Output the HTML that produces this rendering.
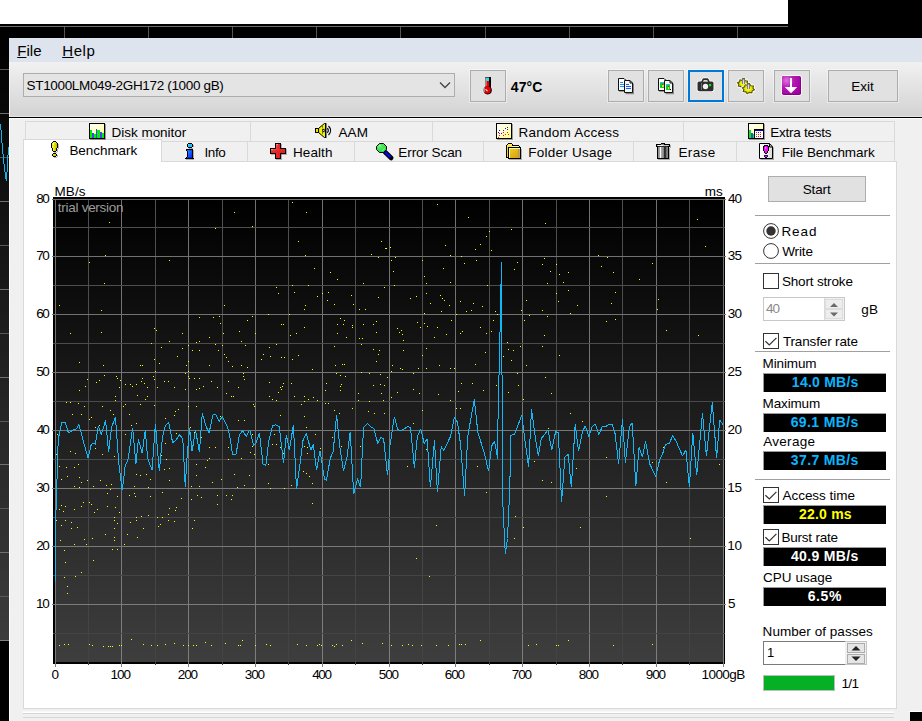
<!DOCTYPE html>
<html><head><meta charset="utf-8"><title>HD Tune Pro</title>
<style>
html,body{margin:0;padding:0;}
body{width:922px;height:721px;background:#000;overflow:hidden;position:relative;font-family:"Liberation Sans",sans-serif;}
.r{position:absolute;box-sizing:border-box;}
.t{position:absolute;white-space:pre;line-height:1;font-family:"Liberation Sans",sans-serif;}
svg{position:absolute;overflow:visible;}
.btn{position:absolute;box-sizing:border-box;border:1px solid #adadad;background:#e1e1e1;box-shadow:0 0 0 1px rgba(255,255,255,0.4);}
.blk{position:absolute;box-sizing:border-box;background:#000;left:763px;width:123px;height:19px;border-top:1px solid #9a9a9a;border-left:1px solid #9a9a9a;margin-top:-1px;}
.cb{position:absolute;box-sizing:border-box;width:16px;height:16px;border:1px solid #333;background:#fff;left:763px;}
.sep{position:absolute;left:755px;width:135px;height:1px;background:#a0a0a0;}
</style></head><body>

<div class="r" style="left:0px;top:0px;width:788px;height:24px;background:#fff;"></div>
<div class="r" style="left:0px;top:27px;width:9px;height:613px;background:linear-gradient(#000,#3c3c3c);"></div>
<svg width="922" height="721" style="left:0;top:0" shape-rendering="crispEdges">
<rect x="0" y="26" width="788" height="1" fill="#6c6c6c"/>
<rect x="64" y="27" width="1" height="11" fill="#555"/>
<rect x="148" y="27" width="1" height="11" fill="#555"/>
<rect x="232" y="27" width="1" height="11" fill="#555"/>
<rect x="316" y="27" width="1" height="11" fill="#555"/>
<rect x="400" y="27" width="1" height="11" fill="#555"/>
<rect x="485" y="27" width="1" height="11" fill="#555"/>
<rect x="569" y="27" width="1" height="11" fill="#555"/>
<rect x="653" y="27" width="1" height="11" fill="#555"/>
<rect x="737" y="27" width="1" height="11" fill="#555"/>
<rect x="0" y="69" width="9" height="1" fill="#585858"/>
<rect x="0" y="113" width="9" height="1" fill="#707070"/>
<rect x="0" y="157" width="9" height="1" fill="#585858"/>
<rect x="0" y="201" width="9" height="1" fill="#707070"/>
<rect x="0" y="245" width="9" height="1" fill="#585858"/>
<rect x="0" y="289" width="9" height="1" fill="#707070"/>
<rect x="0" y="333" width="9" height="1" fill="#585858"/>
<rect x="0" y="377" width="9" height="1" fill="#707070"/>
<rect x="0" y="421" width="9" height="1" fill="#585858"/>
<rect x="0" y="464" width="9" height="1" fill="#707070"/>
<rect x="0" y="508" width="9" height="1" fill="#585858"/>
<rect x="0" y="552" width="9" height="1" fill="#707070"/>
<rect x="0" y="596" width="9" height="1" fill="#585858"/>
<rect x="0" y="640" width="9" height="1" fill="#808080"/>
<polyline points="0.5,124 1.5,136 2.5,149 3.5,159 4.5,168 5.5,176 6.5,181 7.5,164 8.5,147" fill="none" stroke="#12b4ee" stroke-width="1"/>
</svg>
<div class="r" style="left:9px;top:38px;width:913px;height:683px;background:#f0f0f0;"></div>
<div class="r" style="left:9px;top:38px;width:913px;height:24px;background:#dde4ee;"></div>
<div class="r" style="left:9px;top:62px;width:913px;height:54px;background:linear-gradient(#f1f1f1,#d3d3d3);"></div>
<div class="r" style="left:9px;top:116px;width:913px;height:1px;background:#e6e6e6;"></div>
<div class="r" style="left:9px;top:117px;width:913px;height:1px;background:#000;"></div>
<div class="r" style="left:9px;top:118px;width:913px;height:1px;background:#fff;"></div>
<div class="r" style="left:9px;top:118px;width:1px;height:603px;background:#fff;"></div>
<div class="r" style="left:9px;top:62px;width:1px;height:55px;background:#f4f4f4;"></div>
<div class="t" style="left:17.20px;top:43.00px;font-size:15px;color:#000;letter-spacing:0.042px;"><u>F</u>ile</div>
<div class="t" style="left:62.20px;top:43.00px;font-size:15px;color:#000;letter-spacing:0.625px;"><u>H</u>elp</div>
<div class="r" style="left:23px;top:73px;width:432px;height:24px;background:#e4e4e4;border:1px solid #adadad;"></div>
<div class="t" style="left:26.59px;top:79.00px;font-size:13.5px;color:#000;letter-spacing:-0.338px;">ST1000LM049-2GH172 (1000 gB)</div>
<svg width="12" height="8" style="left:439px;top:81px"><polyline points="1,1.5 6,6.5 11,1.5" fill="none" stroke="#444" stroke-width="1.3"/></svg>
<div class="btn" style="left:470px;top:70px;width:36px;height:32px;"></div>
<div class="btn" style="left:608px;top:70px;width:36px;height:32px;"></div>
<div class="btn" style="left:648px;top:70px;width:36px;height:32px;"></div>
<div class="btn" style="left:728px;top:70px;width:36px;height:32px;"></div>
<div class="btn" style="left:774px;top:70px;width:36px;height:32px;"></div>
<div class="btn" style="left:688px;top:70px;width:36px;height:32px;border:2px solid #0078d7;"></div>
<div class="btn" style="left:828px;top:70px;width:70px;height:32px;"></div>
<div class="t" style="left:851.32px;top:80.00px;font-size:13.5px;color:#000;letter-spacing:-0.043px;">Exit</div>
<div class="t" style="left:510.79px;top:80.00px;font-size:14px;color:#000;letter-spacing:0.113px;font-weight:bold;">47&deg;C</div>
<div class="r" style="left:25px;top:121px;width:870px;height:21px;background:#f0f0f0;border:1px solid #d9d9d9;border-bottom:none;"></div>
<div class="r" style="left:250px;top:122px;width:1px;height:19px;background:#d9d9d9;"></div>
<div class="r" style="left:432px;top:122px;width:1px;height:19px;background:#d9d9d9;"></div>
<div class="r" style="left:683px;top:122px;width:1px;height:19px;background:#d9d9d9;"></div>
<div class="r" style="left:23px;top:141px;width:872px;height:21px;background:#f0f0f0;border:1px solid #d9d9d9;"></div>
<div class="r" style="left:247px;top:142px;width:1px;height:19px;background:#d9d9d9;"></div>
<div class="r" style="left:354px;top:142px;width:1px;height:19px;background:#d9d9d9;"></div>
<div class="r" style="left:483px;top:142px;width:1px;height:19px;background:#d9d9d9;"></div>
<div class="r" style="left:633px;top:142px;width:1px;height:19px;background:#d9d9d9;"></div>
<div class="r" style="left:736px;top:142px;width:1px;height:19px;background:#d9d9d9;"></div>
<div class="r" style="left:23px;top:161px;width:874px;height:548px;background:#fff;border:1px solid #d9d9d9;"></div>
<div class="r" style="left:23px;top:139px;width:139px;height:23px;background:#fff;border:1px solid #d9d9d9;border-bottom:none;"></div>
<div class="t" style="left:111.62px;top:126.00px;font-size:13.5px;color:#000;letter-spacing:-0.037px;">Disk monitor</div>
<div class="t" style="left:338.40px;top:126.00px;font-size:13.5px;color:#000;letter-spacing:0.126px;">AAM</div>
<div class="t" style="left:518.52px;top:126.00px;font-size:13.5px;color:#000;letter-spacing:0.235px;">Random Access</div>
<div class="t" style="left:770.32px;top:126.00px;font-size:13.5px;color:#000;letter-spacing:-0.253px;">Extra tests</div>
<div class="t" style="left:69.42px;top:144.00px;font-size:13.5px;color:#000;letter-spacing:-0.054px;">Benchmark</div>
<div class="t" style="left:204.48px;top:146.00px;font-size:13.5px;color:#000;letter-spacing:-0.408px;">Info</div>
<div class="t" style="left:292.92px;top:146.00px;font-size:13.5px;color:#000;letter-spacing:0.109px;">Health</div>
<div class="t" style="left:398.32px;top:146.00px;font-size:13.5px;color:#000;letter-spacing:-0.086px;">Error Scan</div>
<div class="t" style="left:528.32px;top:146.00px;font-size:13.5px;color:#000;letter-spacing:0.235px;">Folder Usage</div>
<div class="t" style="left:678.52px;top:146.00px;font-size:13.5px;color:#000;letter-spacing:0.338px;">Erase</div>
<div class="t" style="left:781.72px;top:146.00px;font-size:13.5px;color:#000;letter-spacing:-0.067px;">File Benchmark</div>
<svg width="922" height="721" style="left:0;top:0">
<defs>
<linearGradient id="yl" x1="0" y1="0" x2="1" y2="1"><stop offset="0" stop-color="#fff"/><stop offset="1" stop-color="#ffff8c"/></linearGradient>
<linearGradient id="gold" x1="0" y1="0" x2="1" y2="1"><stop offset="0" stop-color="#ecd22a"/><stop offset="1" stop-color="#d89a08"/></linearGradient>
<linearGradient id="red" x1="0" y1="0" x2="1" y2="1"><stop offset="0" stop-color="#ff5a5a"/><stop offset="0.4" stop-color="#e42a2a"/><stop offset="1" stop-color="#f01818"/></linearGradient>
<linearGradient id="blu" x1="0" y1="0" x2="1" y2="1"><stop offset="0" stop-color="#1a8aff"/><stop offset="1" stop-color="#0a22f0"/></linearGradient>
<linearGradient id="yel" x1="0" y1="0" x2="1" y2="0"><stop offset="0" stop-color="#f6f640"/><stop offset="0.5" stop-color="#e2e200"/><stop offset="1" stop-color="#b8b800"/></linearGradient>
<radialGradient id="pur" cx="0.25" cy="0.25" r="0.9"><stop offset="0" stop-color="#e070e0"/><stop offset="0.45" stop-color="#b418b4"/><stop offset="1" stop-color="#a000a0"/></radialGradient>
<linearGradient id="can" x1="0" y1="0" x2="1" y2="0"><stop offset="0" stop-color="#8c8c8c"/><stop offset="0.2" stop-color="#a8a8a8"/><stop offset="0.2" stop-color="#fdfdfd"/><stop offset="0.3" stop-color="#fdfdfd"/><stop offset="0.3" stop-color="#b4b4b4"/><stop offset="0.6" stop-color="#7c7c7c"/><stop offset="0.6" stop-color="#262626"/><stop offset="0.8" stop-color="#3a3a3a"/><stop offset="0.8" stop-color="#6c6c6c"/><stop offset="1" stop-color="#8a8a8a"/></linearGradient>
<linearGradient id="pg" x1="0" y1="0" x2="1" y2="0"><stop offset="0" stop-color="#fff"/><stop offset="0.5" stop-color="#f4f4f4"/><stop offset="1" stop-color="#d8d8d8"/></linearGradient>
<radialGradient id="grn" cx="0.35" cy="0.3" r="0.8"><stop offset="0" stop-color="#60f070"/><stop offset="1" stop-color="#20d838"/></radialGradient>
</defs>
<g shape-rendering="crispEdges">
<rect x="90" y="124" width="16" height="16" fill="rgba(0,0,0,0.35)"/>
<rect x="89" y="123" width="16" height="16" fill="#000"/>
<rect x="90" y="124" width="14" height="14" fill="url(#yl)"/>
<rect x="90" y="130" width="2" height="8" fill="#00f000"/>
<rect x="92" y="133" width="2" height="5" fill="#4a3cff"/>
<rect x="94" y="134" width="2" height="4" fill="#00f000"/>
<rect x="96" y="129" width="1" height="9" fill="#4a3cff"/>
<rect x="97" y="130" width="3" height="8" fill="#00f000"/>
<rect x="100" y="132" width="2" height="6" fill="#4a3cff"/>
<rect x="102" y="133" width="2" height="5" fill="#00f000"/>
<rect x="497" y="124" width="16" height="16" fill="rgba(0,0,0,0.35)"/>
<rect x="496" y="123" width="16" height="16" fill="#000"/>
<rect x="497" y="124" width="14" height="14" fill="url(#yl)"/>
<rect x="499" y="130" width="1" height="1" fill="#1010ff"/>
<rect x="498" y="132" width="1" height="1" fill="#1010ff"/>
<rect x="501" y="133" width="1" height="1" fill="#1010ff"/>
<rect x="503" y="130" width="1" height="1" fill="#1010ff"/>
<rect x="505" y="128" width="1" height="1" fill="#1010ff"/>
<rect x="507" y="127" width="1" height="1" fill="#1010ff"/>
<rect x="507" y="129" width="1" height="1" fill="#1010ff"/>
<rect x="499" y="133" width="1" height="1" fill="#ff1010"/>
<rect x="499" y="135" width="1" height="1" fill="#ff1010"/>
<rect x="498" y="137" width="1" height="1" fill="#ff1010"/>
<rect x="503" y="132" width="1" height="1" fill="#ff1010"/>
<rect x="503" y="135" width="1" height="1" fill="#ff1010"/>
<rect x="505" y="134" width="1" height="1" fill="#ff1010"/>
<rect x="507" y="132" width="1" height="1" fill="#ff1010"/>
<rect x="508" y="134" width="1" height="1" fill="#ff1010"/>
<rect x="749" y="124" width="16" height="16" fill="rgba(0,0,0,0.35)"/>
<rect x="748" y="123" width="16" height="16" fill="#000"/>
<rect x="749" y="124" width="14" height="14" fill="url(#yl)"/>
<rect x="749" y="130" width="2" height="8" fill="#00f000"/>
<rect x="751" y="133" width="2" height="5" fill="#4a3cff"/>
<rect x="753" y="134" width="1" height="4" fill="#00f000"/>
<rect x="754" y="129" width="10" height="10" fill="#000"/>
<rect x="755" y="130" width="8" height="1" fill="#0000e0"/>
<rect x="755" y="131" width="8" height="7" fill="#fafafa"/>
<rect x="756" y="132" width="1" height="1" fill="#ff1010"/>
<rect x="758" y="132" width="1" height="1" fill="#1010ff"/>
<rect x="760" y="132" width="1" height="1" fill="#ff1010"/>
<rect x="756" y="134" width="1" height="1" fill="#10c010"/>
<rect x="758" y="134" width="1" height="1" fill="#ff1010"/>
<rect x="760" y="134" width="1" height="1" fill="#ff1010"/>
<rect x="756" y="136" width="1" height="1" fill="#ff1010"/>
<rect x="758" y="136" width="1" height="1" fill="#ff1010"/>
<rect x="760" y="136" width="1" height="1" fill="#1010ff"/>
<rect x="54" y="142" width="3" height="1" fill="rgba(0,0,0,0.28)"/>
<rect x="58" y="144" width="1" height="5" fill="rgba(0,0,0,0.28)"/>
<rect x="57" y="149" width="1" height="3" fill="rgba(0,0,0,0.28)"/>
<rect x="54" y="152" width="3" height="1" fill="rgba(0,0,0,0.28)"/>
<rect x="57" y="155" width="1" height="2" fill="rgba(0,0,0,0.28)"/>
<rect x="54" y="157" width="3" height="1" fill="rgba(0,0,0,0.28)"/>
<rect x="53" y="141" width="3" height="1" fill="#000"/>
<rect x="52" y="142" width="5" height="1" fill="#000"/>
<rect x="51" y="143" width="7" height="5" fill="#000"/>
<rect x="52" y="148" width="5" height="3" fill="#000"/>
<rect x="53" y="151" width="3" height="1" fill="#000"/>
<rect x="53" y="142" width="3" height="1" fill="#f0f030"/>
<rect x="52" y="143" width="5" height="5" fill="url(#yel)"/>
<rect x="53" y="148" width="3" height="3" fill="url(#yel)"/>
<rect x="53" y="143" width="1" height="2" fill="#ffffa0"/>
<rect x="53" y="153" width="3" height="1" fill="#000"/>
<rect x="52" y="154" width="5" height="2" fill="#000"/>
<rect x="53" y="156" width="3" height="1" fill="#000"/>
<rect x="53" y="154" width="3" height="2" fill="#d6d600"/>
<rect x="188" y="143" width="4" height="1" fill="#000"/>
<rect x="187" y="144" width="6" height="3" fill="#000"/>
<rect x="188" y="147" width="4" height="1" fill="#000"/>
<rect x="188" y="144" width="4" height="3" fill="#22c0ff"/>
<rect x="188" y="144" width="1" height="1" fill="#60e8ff"/>
<rect x="193" y="145" width="1" height="2" fill="rgba(0,0,0,0.28)"/>
<rect x="189" y="148" width="4" height="1" fill="rgba(0,0,0,0.28)"/>
<rect x="186" y="149" width="7" height="2" fill="#000"/>
<rect x="187" y="151" width="6" height="6" fill="#000"/>
<rect x="186" y="157" width="7" height="1" fill="#000"/>
<rect x="185" y="158" width="9" height="1" fill="#000"/>
<rect x="187" y="150" width="5" height="1" fill="url(#blu)"/>
<rect x="188" y="151" width="4" height="6" fill="url(#blu)"/>
<rect x="187" y="157" width="5" height="1" fill="#0a22f0"/>
<rect x="193" y="150" width="1" height="8" fill="rgba(0,0,0,0.28)"/>
<rect x="186" y="159" width="8" height="1" fill="rgba(0,0,0,0.28)"/>
<rect x="276" y="144" width="6" height="16" fill="rgba(0,0,0,0.28)"/>
<rect x="271" y="149" width="16" height="6" fill="rgba(0,0,0,0.28)"/>
<rect x="275" y="143" width="6" height="16" fill="#000"/>
<rect x="270" y="148" width="16" height="6" fill="#000"/>
<rect x="276" y="144" width="4" height="14" fill="url(#red)"/>
<rect x="271" y="149" width="14" height="4" fill="url(#red)"/>
<rect x="276" y="144" width="2" height="1" fill="#ff8a8a"/>
<rect x="271" y="149" width="2" height="1" fill="#ff8a8a"/>
<rect x="658" y="148" width="12" height="12" fill="rgba(0,0,0,0.28)"/>
<rect x="670" y="145" width="1" height="3" fill="rgba(0,0,0,0.28)"/>
<rect x="661" y="143" width="4" height="1" fill="#000"/>
<rect x="656" y="144" width="14" height="3" fill="#000"/>
<rect x="657" y="147" width="12" height="12" fill="#000"/>
<rect x="658" y="147" width="10" height="11" fill="url(#can)"/>
<rect x="657" y="145" width="12" height="1" fill="#c8c8c8"/>
<rect x="658" y="145" width="5" height="1" fill="#f4f4f4"/>
<rect x="661" y="144" width="3" height="1" fill="#8a8a8a"/>
<rect x="658" y="146" width="10" height="1" fill="#2a2a2a"/>
</g><g>
<polygon points="760.5,144.5 771.5,144.5 774,148 774,160 760.5,160" fill="rgba(0,0,0,0.3)"/>
<polygon points="759.5,143.5 769.5,143.5 772.5,147 772.5,158.5 759.5,158.5" fill="url(#pg)" stroke="#000" stroke-width="1"/>
<polyline points="769.5,143.5 769.5,147 772.5,147" fill="none" stroke="#000" stroke-width="1"/>
</g><g shape-rendering="crispEdges">
<rect x="764" y="145" width="4" height="1" fill="#000"/>
<rect x="763" y="146" width="6" height="5" fill="#000"/>
<rect x="764" y="151" width="4" height="2" fill="#000"/>
<rect x="765" y="153" width="2" height="1" fill="#000"/>
<rect x="764" y="146" width="4" height="5" fill="#f210f2"/>
<rect x="765" y="151" width="2" height="2" fill="#f210f2"/>
<rect x="764" y="146" width="1" height="1" fill="#5010a0"/>
<rect x="767" y="146" width="1" height="1" fill="#5010a0"/>
<rect x="765" y="147" width="1" height="2" fill="#ff80ff"/>
<rect x="764" y="155" width="4" height="2" fill="#201080"/>
<rect x="765" y="156" width="2" height="1" fill="#f210f2"/>
<rect x="765" y="157" width="2" height="1" fill="#000"/>
<rect x="509" y="149" width="13" height="11" fill="rgba(0,0,0,0.28)"/>
<rect x="508" y="143" width="4" height="1" fill="#000"/>
<rect x="507" y="144" width="6" height="1" fill="#000"/>
<rect x="506" y="145" width="13" height="13" fill="#000"/>
<rect x="519" y="146" width="1" height="2" fill="#000"/>
<rect x="508" y="144" width="4" height="1" fill="#fff27a"/>
<rect x="507" y="145" width="5" height="2" fill="#ffe83a"/>
<rect x="512" y="146" width="7" height="1" fill="#fff8a0"/>
<rect x="507" y="147" width="1" height="10" fill="#f4d020"/>
<rect x="508" y="147" width="13" height="12" fill="#000"/>
<rect x="509" y="148" width="11" height="10" fill="url(#gold)"/>
<rect x="509" y="148" width="11" height="1" fill="#fff6b0"/>
<rect x="509" y="148" width="1" height="10" fill="#fff6b0"/>
<rect x="518" y="149" width="1" height="9" fill="#9a9a9a"/>
<rect x="485" y="77" width="5" height="1" fill="#505050"/>
<rect x="485" y="78" width="1" height="10" fill="#8a8a8a"/>
<rect x="489" y="77" width="2" height="11" fill="#000"/>
<rect x="486" y="78" width="3" height="3" fill="#20e0e8"/>
<rect x="486" y="81" width="3" height="7" fill="#f00000"/>
<rect x="486" y="81" width="1" height="6" fill="#ff5050"/>
</g>
<circle cx="487.7" cy="90.3" r="4.1" fill="#000"/><circle cx="487.2" cy="89.9" r="3.6" fill="#e80000"/>
<path d="M483.4 88.2 v3.4 l1.2 1 v-5.4z" fill="#70e0e8"/>
<path d="M485.8 89 q0.3 1.6 1.8 1.9" stroke="#fff" stroke-width="1.1" fill="none"/>
<rect x="619.3" y="79.3" width="7" height="12.6" fill="rgba(0,0,0,0.35)"/>
<polygon points="618.5,78.5 624,78.5 625.5,80 625.5,90.5 618.5,90.5" fill="#fff" stroke="#111" stroke-width="1"/>
<polygon points="625.6,81.7 631.5,81.7 634,84 634,94.2 625.6,94.2" fill="rgba(0,0,0,0.4)"/>
<polygon points="624.5,80.5 630,80.5 632.5,83 632.5,92.5 624.5,92.5" fill="#f6f6f6" stroke="#111" stroke-width="1"/>
<polyline points="630,80.5 630,83 632.5,83" fill="none" stroke="#111" stroke-width="1"/>
<g shape-rendering="crispEdges">
<rect x="620" y="82" width="3" height="1" fill="#1a90ff"/>
<rect x="620" y="84" width="4" height="1" fill="#1a90ff"/>
<rect x="620" y="86" width="4" height="1" fill="#1a90ff"/>
<rect x="626" y="84" width="3" height="1" fill="#1060ff"/>
<rect x="626" y="86" width="5" height="1" fill="#1060ff"/>
<rect x="626" y="88" width="5" height="1" fill="#1060ff"/>
</g>
<rect x="659.3" y="79.3" width="7" height="12.6" fill="rgba(0,0,0,0.35)"/>
<polygon points="658.5,78.5 664,78.5 665.5,80 665.5,90.5 658.5,90.5" fill="#fff" stroke="#111" stroke-width="1"/>
<polygon points="665.6,81.7 671.5,81.7 674,84 674,94.2 665.6,94.2" fill="rgba(0,0,0,0.4)"/>
<polygon points="664.5,80.5 670,80.5 672.5,83 672.5,92.5 664.5,92.5" fill="#f6f6f6" stroke="#111" stroke-width="1"/>
<polyline points="670,80.5 670,83 672.5,83" fill="none" stroke="#111" stroke-width="1"/>
<g shape-rendering="crispEdges">
<rect x="660" y="82" width="4" height="1" fill="#30b8ff"/>
<rect x="660" y="83" width="4" height="5" fill="#10d028"/>
<rect x="662" y="84" width="1" height="1" fill="#f01010"/>
<rect x="662" y="85" width="2" height="2" fill="#e8e020"/>
<rect x="666" y="84" width="4" height="1" fill="#30b8ff"/>
<rect x="666" y="85" width="4" height="5" fill="#10d028"/>
<rect x="668" y="86" width="1" height="1" fill="#f01010"/>
<rect x="668" y="87" width="1" height="2" fill="#e8e020"/>
<rect x="670" y="89" width="1" height="1" fill="#000"/>
</g>
<path d="M697.5 83 q0 -1.5 1.5 -1.5 h2.3 l1.2 -2.6 q0.3 -0.6 1 -0.6 h4 q0.7 0 1 0.6 l1.2 2.6 h2.3 q1.5 0 1.5 1.5 v6.5 q0 1.8 -1.8 1.8 h-12.4 q-1.8 0 -1.8 -1.8z" fill="#2e2e2e" stroke="#fff" stroke-width="1.6" paint-order="stroke"/>
<path d="M703 81.8 q0.3 -1.8 1.2 -1.8 h2.6 q0.9 0 1.2 1.8z" fill="#d8d8d8"/>
<circle cx="705.5" cy="86.5" r="2.7" fill="#f2f2f2"/>
<rect x="701" y="83" width="1" height="7" fill="#6a6a6a"/>
<rect x="709" y="84" width="2.2" height="2.2" fill="#00f000"/>
<g>
<polygon points="748.49,84.47 746.45,85.44 746.11,87.32 743.81,86.85 741.91,87.99 740.70,86.36 738.34,86.09 738.94,84.25 737.51,82.73 739.55,81.76 739.89,79.88 742.19,80.35 744.09,79.21 745.30,80.84 747.66,81.11 747.06,82.95" fill="none" stroke="#fff" stroke-width="3" stroke-linejoin="round"/><polygon points="748.49,84.47 746.45,85.44 746.11,87.32 743.81,86.85 741.91,87.99 740.70,86.36 738.34,86.09 738.94,84.25 737.51,82.73 739.55,81.76 739.89,79.88 742.19,80.35 744.09,79.21 745.30,80.84 747.66,81.11 747.06,82.95" fill="#e4e400" stroke="#545400" stroke-width="1.1" stroke-linejoin="miter"/>
<polygon points="754.48,89.77 752.21,90.84 751.84,92.92 749.30,92.40 747.19,93.66 745.85,91.85 743.24,91.56 743.90,89.52 742.32,87.83 744.59,86.76 744.96,84.68 747.50,85.20 749.61,83.94 750.95,85.75 753.56,86.04 752.90,88.08" fill="none" stroke="#fff" stroke-width="3" stroke-linejoin="round"/><polygon points="754.48,89.77 752.21,90.84 751.84,92.92 749.30,92.40 747.19,93.66 745.85,91.85 743.24,91.56 743.90,89.52 742.32,87.83 744.59,86.76 744.96,84.68 747.50,85.20 749.61,83.94 750.95,85.75 753.56,86.04 752.90,88.08" fill="#e4e400" stroke="#545400" stroke-width="1.1" stroke-linejoin="miter"/>
<ellipse cx="743" cy="83.8" rx="2.6" ry="1.6" fill="#f4f428"/><ellipse cx="748.4" cy="89" rx="2.8" ry="1.8" fill="#f4f428"/>
<rect x="742" y="79" width="3" height="5" fill="#7c7c9c"/><rect x="743" y="79.4" width="1" height="4.6" fill="#dcdcf0"/><rect x="742" y="78.2" width="3" height="1" fill="#4c4c00"/>
<rect x="747" y="84" width="3" height="5" fill="#7c7c9c"/><rect x="748" y="84.4" width="1" height="4.6" fill="#dcdcf0"/><rect x="747" y="83.2" width="3" height="1" fill="#4c4c00"/>
</g>
<rect x="781.3" y="75.3" width="20.4" height="20.4" rx="2.5" fill="#fff"/>
<rect x="782" y="76" width="19" height="19" rx="1.8" fill="#7c007c"/>
<rect x="782" y="76" width="18.2" height="18.2" rx="1.8" fill="url(#pur)"/>
<polygon points="790,78 792,78 792,87 797.2,87 791,93.3 784.8,87 790,87" fill="#fff"/>
<rect x="315.5" y="128.5" width="3" height="4" fill="#e8e800" stroke="#000"/>
<polygon points="318.6,128.4 324.4,123.5 325.6,123.5 325.6,137.5 324.4,137.5 318.6,132.6" fill="#f2f200" stroke="#000" stroke-width="1"/>
<rect x="325" y="123" width="1.4" height="15" fill="#000"/>
<line x1="322.5" y1="125.8" x2="322.5" y2="135.6" stroke="#6a6a00" stroke-width="0.9" stroke-dasharray="2,1"/>
<rect x="322.8" y="129.2" width="1.4" height="2.6" fill="#fff" stroke="#000" stroke-width="0.7"/>
<path d="M327.4 128.2 q1.9 2.3 0 4.6" fill="none" stroke="#000" stroke-width="1.05"/>
<path d="M328.5 126 q4.3 4.5 0 9" fill="none" stroke="#000" stroke-width="1.15"/>
<line x1="385" y1="152" x2="391.2" y2="158" stroke="#000" stroke-width="4.6" stroke-linecap="round"/>
<line x1="385" y1="152" x2="390.6" y2="157.4" stroke="#0808d8" stroke-width="2.6" stroke-linecap="butt"/>
<polygon points="379.5,143.5 383.5,143.5 386.5,146.5 386.5,149.5 383.5,152.5 379.5,152.5 376.5,149.5 376.5,146.5" fill="url(#grn)" stroke="#000" stroke-width="1"/>
<line x1="379" y1="146.5" x2="380.5" y2="145" stroke="#d8ffd8" stroke-width="0.9"/><line x1="382.2" y1="150.8" x2="384.8" y2="148.2" stroke="#d8ffd8" stroke-width="0.9" stroke-dasharray="0.8,0.5"/>
</svg>
<svg width="922" height="721" style="left:0;top:0">
<defs><linearGradient id="cg" x1="0" y1="0" x2="0" y2="1"><stop offset="0" stop-color="#000"/><stop offset="1" stop-color="#3e3e3e"/></linearGradient></defs>
<g shape-rendering="crispEdges">
<rect x="53" y="197" width="672" height="467" fill="#000"/>
<rect x="55" y="199" width="669" height="463" fill="url(#cg)"/>
<defs><linearGradient id="gmaj" gradientUnits="userSpaceOnUse" x1="0" y1="199" x2="0" y2="662"><stop offset="0" stop-color="#707070"/><stop offset="1" stop-color="#7e7e7e"/></linearGradient><linearGradient id="gmin" gradientUnits="userSpaceOnUse" x1="0" y1="199" x2="0" y2="662"><stop offset="0" stop-color="#505050"/><stop offset="1" stop-color="#434343"/></linearGradient></defs>
<rect x="55" y="199" width="1" height="468" fill="url(#gmaj)"/>
<rect x="88" y="199" width="1" height="466" fill="url(#gmin)"/>
<rect x="121" y="199" width="1" height="468" fill="url(#gmaj)"/>
<rect x="155" y="199" width="1" height="466" fill="url(#gmin)"/>
<rect x="188" y="199" width="1" height="468" fill="url(#gmaj)"/>
<rect x="222" y="199" width="1" height="466" fill="url(#gmin)"/>
<rect x="255" y="199" width="1" height="468" fill="url(#gmaj)"/>
<rect x="288" y="199" width="1" height="466" fill="url(#gmin)"/>
<rect x="322" y="199" width="1" height="468" fill="url(#gmaj)"/>
<rect x="355" y="199" width="1" height="466" fill="url(#gmin)"/>
<rect x="389" y="199" width="1" height="468" fill="url(#gmaj)"/>
<rect x="422" y="199" width="1" height="466" fill="url(#gmin)"/>
<rect x="455" y="199" width="1" height="468" fill="url(#gmaj)"/>
<rect x="489" y="199" width="1" height="466" fill="url(#gmin)"/>
<rect x="522" y="199" width="1" height="468" fill="url(#gmaj)"/>
<rect x="556" y="199" width="1" height="466" fill="url(#gmin)"/>
<rect x="589" y="199" width="1" height="468" fill="url(#gmaj)"/>
<rect x="622" y="199" width="1" height="466" fill="url(#gmin)"/>
<rect x="656" y="199" width="1" height="468" fill="url(#gmaj)"/>
<rect x="689" y="199" width="1" height="466" fill="url(#gmin)"/>
<rect x="723" y="199" width="1" height="468" fill="url(#gmaj)"/>
<rect x="53" y="633" width="672" height="1" fill="#444444"/>
<rect x="52" y="604" width="674" height="1" fill="#7c7c7c"/>
<rect x="53" y="575" width="672" height="1" fill="#454545"/>
<rect x="52" y="546" width="674" height="1" fill="#7a7a7a"/>
<rect x="53" y="517" width="672" height="1" fill="#474747"/>
<rect x="52" y="488" width="674" height="1" fill="#797979"/>
<rect x="53" y="459" width="672" height="1" fill="#494949"/>
<rect x="52" y="430" width="674" height="1" fill="#777777"/>
<rect x="53" y="401" width="672" height="1" fill="#4a4a4a"/>
<rect x="52" y="372" width="674" height="1" fill="#757575"/>
<rect x="53" y="343" width="672" height="1" fill="#4c4c4c"/>
<rect x="52" y="314" width="674" height="1" fill="#737373"/>
<rect x="53" y="285" width="672" height="1" fill="#4e4e4e"/>
<rect x="52" y="256" width="674" height="1" fill="#727272"/>
<rect x="53" y="227" width="672" height="1" fill="#4f4f4f"/>
<rect x="52" y="199" width="674" height="1" fill="#707070"/>
</g>
<g fill="#ffff00" shape-rendering="crispEdges">
<rect x="109" y="222" width="1" height="1"/>
<rect x="234" y="212" width="1" height="1"/>
<rect x="292" y="202" width="1" height="1"/>
<rect x="306" y="212" width="1" height="1"/>
<rect x="215" y="228" width="1" height="1"/>
<rect x="252" y="226" width="1" height="1"/>
<rect x="298" y="241" width="1" height="1"/>
<rect x="381" y="241" width="1" height="1"/>
<rect x="386" y="248" width="1" height="1"/>
<rect x="105" y="255" width="1" height="1"/>
<rect x="89" y="262" width="1" height="1"/>
<rect x="169" y="260" width="1" height="1"/>
<rect x="305" y="255" width="1" height="1"/>
<rect x="371" y="254" width="1" height="1"/>
<rect x="378" y="257" width="1" height="1"/>
<rect x="314" y="268" width="1" height="1"/>
<rect x="330" y="272" width="1" height="1"/>
<rect x="337" y="279" width="1" height="1"/>
<rect x="104" y="283" width="1" height="1"/>
<rect x="363" y="283" width="1" height="1"/>
<rect x="276" y="287" width="1" height="1"/>
<rect x="292" y="285" width="1" height="1"/>
<rect x="308" y="285" width="1" height="1"/>
<rect x="384" y="287" width="1" height="1"/>
<rect x="278" y="293" width="1" height="1"/>
<rect x="294" y="292" width="1" height="1"/>
<rect x="322" y="293" width="1" height="1"/>
<rect x="328" y="292" width="1" height="1"/>
<rect x="317" y="296" width="1" height="1"/>
<rect x="351" y="295" width="1" height="1"/>
<rect x="378" y="297" width="1" height="1"/>
<rect x="59" y="305" width="1" height="1"/>
<rect x="224" y="305" width="1" height="1"/>
<rect x="305" y="305" width="1" height="1"/>
<rect x="334" y="304" width="1" height="1"/>
<rect x="353" y="304" width="1" height="1"/>
<rect x="327" y="300" width="1" height="1"/>
<rect x="101" y="310" width="1" height="1"/>
<rect x="304" y="309" width="1" height="1"/>
<rect x="359" y="309" width="1" height="1"/>
<rect x="365" y="309" width="1" height="1"/>
<rect x="199" y="317" width="1" height="1"/>
<rect x="213" y="317" width="1" height="1"/>
<rect x="219" y="316" width="1" height="1"/>
<rect x="252" y="316" width="1" height="1"/>
<rect x="268" y="314" width="1" height="1"/>
<rect x="289" y="314" width="1" height="1"/>
<rect x="340" y="318" width="1" height="1"/>
<rect x="344" y="320" width="1" height="1"/>
<rect x="247" y="320" width="1" height="1"/>
<rect x="220" y="323" width="1" height="1"/>
<rect x="281" y="324" width="1" height="1"/>
<rect x="283" y="324" width="1" height="1"/>
<rect x="337" y="324" width="1" height="1"/>
<rect x="343" y="324" width="1" height="1"/>
<rect x="352" y="325" width="1" height="1"/>
<rect x="352" y="327" width="1" height="1"/>
<rect x="363" y="324" width="1" height="1"/>
<rect x="373" y="324" width="1" height="1"/>
<rect x="376" y="321" width="1" height="1"/>
<rect x="154" y="328" width="1" height="1"/>
<rect x="156" y="330" width="1" height="1"/>
<rect x="304" y="327" width="1" height="1"/>
<rect x="70" y="333" width="1" height="1"/>
<rect x="101" y="332" width="1" height="1"/>
<rect x="182" y="333" width="1" height="1"/>
<rect x="223" y="333" width="1" height="1"/>
<rect x="239" y="331" width="1" height="1"/>
<rect x="255" y="333" width="1" height="1"/>
<rect x="296" y="333" width="1" height="1"/>
<rect x="290" y="335" width="1" height="1"/>
<rect x="337" y="333" width="1" height="1"/>
<rect x="376" y="332" width="1" height="1"/>
<rect x="209" y="337" width="1" height="1"/>
<rect x="346" y="337" width="1" height="1"/>
<rect x="359" y="338" width="1" height="1"/>
<rect x="362" y="338" width="1" height="1"/>
<rect x="199" y="341" width="1" height="1"/>
<rect x="196" y="342" width="1" height="1"/>
<rect x="169" y="341" width="1" height="1"/>
<rect x="151" y="343" width="1" height="1"/>
<rect x="215" y="344" width="1" height="1"/>
<rect x="222" y="345" width="1" height="1"/>
<rect x="241" y="341" width="1" height="1"/>
<rect x="245" y="345" width="1" height="1"/>
<rect x="276" y="344" width="1" height="1"/>
<rect x="269" y="347" width="1" height="1"/>
<rect x="334" y="346" width="1" height="1"/>
<rect x="361" y="344" width="1" height="1"/>
<rect x="373" y="349" width="1" height="1"/>
<rect x="379" y="350" width="1" height="1"/>
<rect x="161" y="347" width="1" height="1"/>
<rect x="182" y="348" width="1" height="1"/>
<rect x="192" y="350" width="1" height="1"/>
<rect x="199" y="350" width="1" height="1"/>
<rect x="188" y="345" width="1" height="1"/>
<rect x="218" y="350" width="1" height="1"/>
<rect x="263" y="354" width="1" height="1"/>
<rect x="177" y="356" width="1" height="1"/>
<rect x="224" y="354" width="1" height="1"/>
<rect x="226" y="357" width="1" height="1"/>
<rect x="261" y="359" width="1" height="1"/>
<rect x="270" y="356" width="1" height="1"/>
<rect x="281" y="357" width="1" height="1"/>
<rect x="284" y="357" width="1" height="1"/>
<rect x="298" y="355" width="1" height="1"/>
<rect x="378" y="354" width="1" height="1"/>
<rect x="79" y="362" width="1" height="1"/>
<rect x="103" y="365" width="1" height="1"/>
<rect x="140" y="365" width="1" height="1"/>
<rect x="142" y="365" width="1" height="1"/>
<rect x="154" y="359" width="1" height="1"/>
<rect x="159" y="363" width="1" height="1"/>
<rect x="188" y="361" width="1" height="1"/>
<rect x="186" y="365" width="1" height="1"/>
<rect x="209" y="365" width="1" height="1"/>
<rect x="228" y="361" width="1" height="1"/>
<rect x="232" y="366" width="1" height="1"/>
<rect x="241" y="365" width="1" height="1"/>
<rect x="247" y="367" width="1" height="1"/>
<rect x="292" y="359" width="1" height="1"/>
<rect x="335" y="365" width="1" height="1"/>
<rect x="342" y="364" width="1" height="1"/>
<rect x="344" y="364" width="1" height="1"/>
<rect x="376" y="361" width="1" height="1"/>
<rect x="312" y="369" width="1" height="1"/>
<rect x="188" y="371" width="1" height="1"/>
<rect x="185" y="373" width="1" height="1"/>
<rect x="155" y="371" width="1" height="1"/>
<rect x="243" y="373" width="1" height="1"/>
<rect x="361" y="372" width="1" height="1"/>
<rect x="369" y="373" width="1" height="1"/>
<rect x="380" y="374" width="1" height="1"/>
<rect x="336" y="373" width="1" height="1"/>
<rect x="340" y="375" width="1" height="1"/>
<rect x="345" y="376" width="1" height="1"/>
<rect x="104" y="375" width="1" height="1"/>
<rect x="116" y="376" width="1" height="1"/>
<rect x="87" y="379" width="1" height="1"/>
<rect x="99" y="380" width="1" height="1"/>
<rect x="96" y="382" width="1" height="1"/>
<rect x="117" y="378" width="1" height="1"/>
<rect x="120" y="380" width="1" height="1"/>
<rect x="142" y="378" width="1" height="1"/>
<rect x="141" y="381" width="1" height="1"/>
<rect x="153" y="376" width="1" height="1"/>
<rect x="154" y="379" width="1" height="1"/>
<rect x="188" y="376" width="1" height="1"/>
<rect x="189" y="378" width="1" height="1"/>
<rect x="194" y="378" width="1" height="1"/>
<rect x="199" y="378" width="1" height="1"/>
<rect x="243" y="376" width="1" height="1"/>
<rect x="244" y="379" width="1" height="1"/>
<rect x="125" y="384" width="1" height="1"/>
<rect x="130" y="384" width="1" height="1"/>
<rect x="132" y="386" width="1" height="1"/>
<rect x="136" y="384" width="1" height="1"/>
<rect x="144" y="383" width="1" height="1"/>
<rect x="164" y="381" width="1" height="1"/>
<rect x="168" y="381" width="1" height="1"/>
<rect x="211" y="381" width="1" height="1"/>
<rect x="228" y="381" width="1" height="1"/>
<rect x="269" y="382" width="1" height="1"/>
<rect x="283" y="383" width="1" height="1"/>
<rect x="282" y="386" width="1" height="1"/>
<rect x="291" y="383" width="1" height="1"/>
<rect x="326" y="383" width="1" height="1"/>
<rect x="341" y="384" width="1" height="1"/>
<rect x="340" y="386" width="1" height="1"/>
<rect x="373" y="385" width="1" height="1"/>
<rect x="380" y="384" width="1" height="1"/>
<rect x="384" y="385" width="1" height="1"/>
<rect x="85" y="386" width="1" height="1"/>
<rect x="79" y="390" width="1" height="1"/>
<rect x="119" y="387" width="1" height="1"/>
<rect x="147" y="387" width="1" height="1"/>
<rect x="157" y="387" width="1" height="1"/>
<rect x="174" y="387" width="1" height="1"/>
<rect x="185" y="389" width="1" height="1"/>
<rect x="196" y="389" width="1" height="1"/>
<rect x="199" y="388" width="1" height="1"/>
<rect x="203" y="386" width="1" height="1"/>
<rect x="217" y="387" width="1" height="1"/>
<rect x="280" y="387" width="1" height="1"/>
<rect x="281" y="389" width="1" height="1"/>
<rect x="278" y="392" width="1" height="1"/>
<rect x="238" y="387" width="1" height="1"/>
<rect x="325" y="390" width="1" height="1"/>
<rect x="340" y="390" width="1" height="1"/>
<rect x="358" y="393" width="1" height="1"/>
<rect x="381" y="393" width="1" height="1"/>
<rect x="226" y="393" width="1" height="1"/>
<rect x="231" y="396" width="1" height="1"/>
<rect x="233" y="396" width="1" height="1"/>
<rect x="137" y="395" width="1" height="1"/>
<rect x="147" y="396" width="1" height="1"/>
<rect x="145" y="399" width="1" height="1"/>
<rect x="115" y="396" width="1" height="1"/>
<rect x="269" y="396" width="1" height="1"/>
<rect x="272" y="399" width="1" height="1"/>
<rect x="276" y="400" width="1" height="1"/>
<rect x="294" y="396" width="1" height="1"/>
<rect x="304" y="396" width="1" height="1"/>
<rect x="308" y="399" width="1" height="1"/>
<rect x="313" y="397" width="1" height="1"/>
<rect x="317" y="400" width="1" height="1"/>
<rect x="358" y="400" width="1" height="1"/>
<rect x="369" y="401" width="1" height="1"/>
<rect x="383" y="400" width="1" height="1"/>
<rect x="66" y="402" width="1" height="1"/>
<rect x="70" y="402" width="1" height="1"/>
<rect x="78" y="403" width="1" height="1"/>
<rect x="84" y="406" width="1" height="1"/>
<rect x="102" y="406" width="1" height="1"/>
<rect x="115" y="400" width="1" height="1"/>
<rect x="125" y="404" width="1" height="1"/>
<rect x="123" y="406" width="1" height="1"/>
<rect x="140" y="404" width="1" height="1"/>
<rect x="154" y="405" width="1" height="1"/>
<rect x="188" y="406" width="1" height="1"/>
<rect x="196" y="406" width="1" height="1"/>
<rect x="253" y="404" width="1" height="1"/>
<rect x="254" y="406" width="1" height="1"/>
<rect x="301" y="404" width="1" height="1"/>
<rect x="304" y="401" width="1" height="1"/>
<rect x="325" y="403" width="1" height="1"/>
<rect x="328" y="403" width="1" height="1"/>
<rect x="352" y="408" width="1" height="1"/>
<rect x="334" y="410" width="1" height="1"/>
<rect x="339" y="413" width="1" height="1"/>
<rect x="368" y="411" width="1" height="1"/>
<rect x="374" y="413" width="1" height="1"/>
<rect x="72" y="414" width="1" height="1"/>
<rect x="81" y="414" width="1" height="1"/>
<rect x="110" y="410" width="1" height="1"/>
<rect x="113" y="414" width="1" height="1"/>
<rect x="129" y="414" width="1" height="1"/>
<rect x="178" y="409" width="1" height="1"/>
<rect x="175" y="411" width="1" height="1"/>
<rect x="174" y="415" width="1" height="1"/>
<rect x="220" y="416" width="1" height="1"/>
<rect x="280" y="415" width="1" height="1"/>
<rect x="304" y="416" width="1" height="1"/>
<rect x="384" y="413" width="1" height="1"/>
<rect x="91" y="417" width="1" height="1"/>
<rect x="89" y="419" width="1" height="1"/>
<rect x="165" y="418" width="1" height="1"/>
<rect x="238" y="420" width="1" height="1"/>
<rect x="244" y="420" width="1" height="1"/>
<rect x="136" y="423" width="1" height="1"/>
<rect x="131" y="425" width="1" height="1"/>
<rect x="99" y="425" width="1" height="1"/>
<rect x="95" y="427" width="1" height="1"/>
<rect x="190" y="427" width="1" height="1"/>
<rect x="306" y="427" width="1" height="1"/>
<rect x="437" y="204" width="1" height="1"/>
<rect x="468" y="217" width="1" height="1"/>
<rect x="545" y="223" width="1" height="1"/>
<rect x="697" y="219" width="1" height="1"/>
<rect x="489" y="231" width="1" height="1"/>
<rect x="511" y="229" width="1" height="1"/>
<rect x="486" y="236" width="1" height="1"/>
<rect x="480" y="244" width="1" height="1"/>
<rect x="445" y="245" width="1" height="1"/>
<rect x="475" y="249" width="1" height="1"/>
<rect x="491" y="250" width="1" height="1"/>
<rect x="705" y="246" width="1" height="1"/>
<rect x="385" y="248" width="1" height="1"/>
<rect x="390" y="247" width="1" height="1"/>
<rect x="450" y="255" width="1" height="1"/>
<rect x="461" y="256" width="1" height="1"/>
<rect x="395" y="257" width="1" height="1"/>
<rect x="391" y="260" width="1" height="1"/>
<rect x="422" y="260" width="1" height="1"/>
<rect x="464" y="263" width="1" height="1"/>
<rect x="476" y="260" width="1" height="1"/>
<rect x="517" y="262" width="1" height="1"/>
<rect x="544" y="258" width="1" height="1"/>
<rect x="542" y="264" width="1" height="1"/>
<rect x="556" y="264" width="1" height="1"/>
<rect x="598" y="255" width="1" height="1"/>
<rect x="607" y="257" width="1" height="1"/>
<rect x="652" y="263" width="1" height="1"/>
<rect x="601" y="266" width="1" height="1"/>
<rect x="393" y="271" width="1" height="1"/>
<rect x="443" y="268" width="1" height="1"/>
<rect x="514" y="269" width="1" height="1"/>
<rect x="550" y="271" width="1" height="1"/>
<rect x="568" y="272" width="1" height="1"/>
<rect x="559" y="274" width="1" height="1"/>
<rect x="613" y="272" width="1" height="1"/>
<rect x="424" y="276" width="1" height="1"/>
<rect x="639" y="279" width="1" height="1"/>
<rect x="426" y="283" width="1" height="1"/>
<rect x="450" y="282" width="1" height="1"/>
<rect x="547" y="283" width="1" height="1"/>
<rect x="563" y="282" width="1" height="1"/>
<rect x="394" y="285" width="1" height="1"/>
<rect x="487" y="285" width="1" height="1"/>
<rect x="568" y="290" width="1" height="1"/>
<rect x="556" y="293" width="1" height="1"/>
<rect x="615" y="292" width="1" height="1"/>
<rect x="426" y="293" width="1" height="1"/>
<rect x="440" y="295" width="1" height="1"/>
<rect x="442" y="298" width="1" height="1"/>
<rect x="416" y="296" width="1" height="1"/>
<rect x="410" y="298" width="1" height="1"/>
<rect x="444" y="300" width="1" height="1"/>
<rect x="526" y="300" width="1" height="1"/>
<rect x="558" y="301" width="1" height="1"/>
<rect x="658" y="299" width="1" height="1"/>
<rect x="430" y="303" width="1" height="1"/>
<rect x="449" y="305" width="1" height="1"/>
<rect x="460" y="301" width="1" height="1"/>
<rect x="473" y="303" width="1" height="1"/>
<rect x="482" y="306" width="1" height="1"/>
<rect x="577" y="305" width="1" height="1"/>
<rect x="611" y="303" width="1" height="1"/>
<rect x="471" y="310" width="1" height="1"/>
<rect x="466" y="311" width="1" height="1"/>
<rect x="441" y="311" width="1" height="1"/>
<rect x="424" y="313" width="1" height="1"/>
<rect x="456" y="314" width="1" height="1"/>
<rect x="495" y="311" width="1" height="1"/>
<rect x="497" y="314" width="1" height="1"/>
<rect x="521" y="310" width="1" height="1"/>
<rect x="542" y="310" width="1" height="1"/>
<rect x="529" y="315" width="1" height="1"/>
<rect x="547" y="316" width="1" height="1"/>
<rect x="570" y="313" width="1" height="1"/>
<rect x="657" y="309" width="1" height="1"/>
<rect x="451" y="320" width="1" height="1"/>
<rect x="493" y="320" width="1" height="1"/>
<rect x="524" y="320" width="1" height="1"/>
<rect x="606" y="321" width="1" height="1"/>
<rect x="615" y="319" width="1" height="1"/>
<rect x="417" y="322" width="1" height="1"/>
<rect x="424" y="323" width="1" height="1"/>
<rect x="427" y="326" width="1" height="1"/>
<rect x="420" y="327" width="1" height="1"/>
<rect x="437" y="327" width="1" height="1"/>
<rect x="480" y="327" width="1" height="1"/>
<rect x="397" y="328" width="1" height="1"/>
<rect x="401" y="330" width="1" height="1"/>
<rect x="399" y="332" width="1" height="1"/>
<rect x="402" y="334" width="1" height="1"/>
<rect x="462" y="331" width="1" height="1"/>
<rect x="460" y="333" width="1" height="1"/>
<rect x="446" y="334" width="1" height="1"/>
<rect x="434" y="337" width="1" height="1"/>
<rect x="486" y="333" width="1" height="1"/>
<rect x="491" y="331" width="1" height="1"/>
<rect x="544" y="335" width="1" height="1"/>
<rect x="666" y="330" width="1" height="1"/>
<rect x="698" y="335" width="1" height="1"/>
<rect x="403" y="340" width="1" height="1"/>
<rect x="507" y="342" width="1" height="1"/>
<rect x="426" y="348" width="1" height="1"/>
<rect x="520" y="346" width="1" height="1"/>
<rect x="542" y="346" width="1" height="1"/>
<rect x="403" y="350" width="1" height="1"/>
<rect x="508" y="349" width="1" height="1"/>
<rect x="513" y="350" width="1" height="1"/>
<rect x="485" y="352" width="1" height="1"/>
<rect x="422" y="355" width="1" height="1"/>
<rect x="503" y="356" width="1" height="1"/>
<rect x="559" y="355" width="1" height="1"/>
<rect x="511" y="360" width="1" height="1"/>
<rect x="392" y="365" width="1" height="1"/>
<rect x="400" y="368" width="1" height="1"/>
<rect x="402" y="369" width="1" height="1"/>
<rect x="439" y="365" width="1" height="1"/>
<rect x="475" y="364" width="1" height="1"/>
<rect x="526" y="365" width="1" height="1"/>
<rect x="418" y="368" width="1" height="1"/>
<rect x="426" y="368" width="1" height="1"/>
<rect x="450" y="368" width="1" height="1"/>
<rect x="454" y="368" width="1" height="1"/>
<rect x="391" y="371" width="1" height="1"/>
<rect x="413" y="373" width="1" height="1"/>
<rect x="387" y="377" width="1" height="1"/>
<rect x="517" y="373" width="1" height="1"/>
<rect x="545" y="377" width="1" height="1"/>
<rect x="461" y="383" width="1" height="1"/>
<rect x="472" y="383" width="1" height="1"/>
<rect x="496" y="385" width="1" height="1"/>
<rect x="518" y="385" width="1" height="1"/>
<rect x="413" y="389" width="1" height="1"/>
<rect x="397" y="392" width="1" height="1"/>
<rect x="419" y="393" width="1" height="1"/>
<rect x="391" y="397" width="1" height="1"/>
<rect x="438" y="394" width="1" height="1"/>
<rect x="458" y="391" width="1" height="1"/>
<rect x="483" y="390" width="1" height="1"/>
<rect x="508" y="392" width="1" height="1"/>
<rect x="551" y="393" width="1" height="1"/>
<rect x="450" y="400" width="1" height="1"/>
<rect x="523" y="399" width="1" height="1"/>
<rect x="456" y="408" width="1" height="1"/>
<rect x="460" y="408" width="1" height="1"/>
<rect x="422" y="410" width="1" height="1"/>
<rect x="570" y="413" width="1" height="1"/>
<rect x="413" y="423" width="1" height="1"/>
<rect x="582" y="421" width="1" height="1"/>
<rect x="548" y="428" width="1" height="1"/>
<rect x="57" y="434" width="1" height="1"/>
<rect x="125" y="434" width="1" height="1"/>
<rect x="176" y="433" width="1" height="1"/>
<rect x="194" y="432" width="1" height="1"/>
<rect x="245" y="434" width="1" height="1"/>
<rect x="252" y="434" width="1" height="1"/>
<rect x="274" y="434" width="1" height="1"/>
<rect x="315" y="434" width="1" height="1"/>
<rect x="332" y="437" width="1" height="1"/>
<rect x="286" y="437" width="1" height="1"/>
<rect x="165" y="443" width="1" height="1"/>
<rect x="201" y="437" width="1" height="1"/>
<rect x="209" y="447" width="1" height="1"/>
<rect x="215" y="447" width="1" height="1"/>
<rect x="228" y="447" width="1" height="1"/>
<rect x="252" y="446" width="1" height="1"/>
<rect x="272" y="444" width="1" height="1"/>
<rect x="276" y="444" width="1" height="1"/>
<rect x="280" y="447" width="1" height="1"/>
<rect x="290" y="445" width="1" height="1"/>
<rect x="304" y="446" width="1" height="1"/>
<rect x="307" y="447" width="1" height="1"/>
<rect x="320" y="448" width="1" height="1"/>
<rect x="341" y="446" width="1" height="1"/>
<rect x="360" y="446" width="1" height="1"/>
<rect x="70" y="451" width="1" height="1"/>
<rect x="75" y="453" width="1" height="1"/>
<rect x="56" y="454" width="1" height="1"/>
<rect x="86" y="453" width="1" height="1"/>
<rect x="95" y="448" width="1" height="1"/>
<rect x="102" y="454" width="1" height="1"/>
<rect x="142" y="448" width="1" height="1"/>
<rect x="250" y="452" width="1" height="1"/>
<rect x="254" y="454" width="1" height="1"/>
<rect x="283" y="453" width="1" height="1"/>
<rect x="307" y="453" width="1" height="1"/>
<rect x="161" y="455" width="1" height="1"/>
<rect x="166" y="459" width="1" height="1"/>
<rect x="209" y="458" width="1" height="1"/>
<rect x="207" y="460" width="1" height="1"/>
<rect x="59" y="466" width="1" height="1"/>
<rect x="66" y="467" width="1" height="1"/>
<rect x="78" y="464" width="1" height="1"/>
<rect x="74" y="467" width="1" height="1"/>
<rect x="114" y="456" width="1" height="1"/>
<rect x="124" y="467" width="1" height="1"/>
<rect x="164" y="469" width="1" height="1"/>
<rect x="169" y="468" width="1" height="1"/>
<rect x="196" y="464" width="1" height="1"/>
<rect x="205" y="467" width="1" height="1"/>
<rect x="228" y="459" width="1" height="1"/>
<rect x="241" y="458" width="1" height="1"/>
<rect x="268" y="464" width="1" height="1"/>
<rect x="136" y="474" width="1" height="1"/>
<rect x="140" y="475" width="1" height="1"/>
<rect x="146" y="474" width="1" height="1"/>
<rect x="67" y="476" width="1" height="1"/>
<rect x="79" y="477" width="1" height="1"/>
<rect x="61" y="479" width="1" height="1"/>
<rect x="87" y="480" width="1" height="1"/>
<rect x="81" y="482" width="1" height="1"/>
<rect x="100" y="480" width="1" height="1"/>
<rect x="111" y="484" width="1" height="1"/>
<rect x="150" y="479" width="1" height="1"/>
<rect x="169" y="480" width="1" height="1"/>
<rect x="196" y="475" width="1" height="1"/>
<rect x="212" y="482" width="1" height="1"/>
<rect x="221" y="479" width="1" height="1"/>
<rect x="234" y="474" width="1" height="1"/>
<rect x="249" y="475" width="1" height="1"/>
<rect x="303" y="471" width="1" height="1"/>
<rect x="306" y="473" width="1" height="1"/>
<rect x="309" y="476" width="1" height="1"/>
<rect x="268" y="483" width="1" height="1"/>
<rect x="74" y="486" width="1" height="1"/>
<rect x="79" y="487" width="1" height="1"/>
<rect x="93" y="486" width="1" height="1"/>
<rect x="106" y="485" width="1" height="1"/>
<rect x="121" y="484" width="1" height="1"/>
<rect x="134" y="486" width="1" height="1"/>
<rect x="148" y="487" width="1" height="1"/>
<rect x="191" y="486" width="1" height="1"/>
<rect x="199" y="486" width="1" height="1"/>
<rect x="237" y="487" width="1" height="1"/>
<rect x="244" y="485" width="1" height="1"/>
<rect x="254" y="488" width="1" height="1"/>
<rect x="270" y="488" width="1" height="1"/>
<rect x="284" y="488" width="1" height="1"/>
<rect x="291" y="485" width="1" height="1"/>
<rect x="312" y="483" width="1" height="1"/>
<rect x="110" y="489" width="1" height="1"/>
<rect x="107" y="493" width="1" height="1"/>
<rect x="117" y="496" width="1" height="1"/>
<rect x="129" y="495" width="1" height="1"/>
<rect x="135" y="496" width="1" height="1"/>
<rect x="134" y="493" width="1" height="1"/>
<rect x="150" y="496" width="1" height="1"/>
<rect x="162" y="492" width="1" height="1"/>
<rect x="181" y="498" width="1" height="1"/>
<rect x="191" y="499" width="1" height="1"/>
<rect x="197" y="495" width="1" height="1"/>
<rect x="201" y="497" width="1" height="1"/>
<rect x="217" y="495" width="1" height="1"/>
<rect x="226" y="495" width="1" height="1"/>
<rect x="232" y="495" width="1" height="1"/>
<rect x="231" y="499" width="1" height="1"/>
<rect x="217" y="504" width="1" height="1"/>
<rect x="312" y="503" width="1" height="1"/>
<rect x="83" y="502" width="1" height="1"/>
<rect x="89" y="502" width="1" height="1"/>
<rect x="91" y="504" width="1" height="1"/>
<rect x="61" y="505" width="1" height="1"/>
<rect x="65" y="506" width="1" height="1"/>
<rect x="74" y="509" width="1" height="1"/>
<rect x="81" y="506" width="1" height="1"/>
<rect x="97" y="509" width="1" height="1"/>
<rect x="107" y="506" width="1" height="1"/>
<rect x="115" y="507" width="1" height="1"/>
<rect x="119" y="512" width="1" height="1"/>
<rect x="94" y="512" width="1" height="1"/>
<rect x="59" y="509" width="1" height="1"/>
<rect x="63" y="511" width="1" height="1"/>
<rect x="169" y="508" width="1" height="1"/>
<rect x="176" y="507" width="1" height="1"/>
<rect x="175" y="510" width="1" height="1"/>
<rect x="168" y="514" width="1" height="1"/>
<rect x="162" y="517" width="1" height="1"/>
<rect x="157" y="517" width="1" height="1"/>
<rect x="148" y="515" width="1" height="1"/>
<rect x="141" y="516" width="1" height="1"/>
<rect x="136" y="517" width="1" height="1"/>
<rect x="114" y="517" width="1" height="1"/>
<rect x="114" y="520" width="1" height="1"/>
<rect x="56" y="520" width="1" height="1"/>
<rect x="65" y="520" width="1" height="1"/>
<rect x="71" y="522" width="1" height="1"/>
<rect x="61" y="525" width="1" height="1"/>
<rect x="77" y="527" width="1" height="1"/>
<rect x="71" y="528" width="1" height="1"/>
<rect x="117" y="523" width="1" height="1"/>
<rect x="114" y="528" width="1" height="1"/>
<rect x="130" y="522" width="1" height="1"/>
<rect x="136" y="520" width="1" height="1"/>
<rect x="168" y="520" width="1" height="1"/>
<rect x="174" y="521" width="1" height="1"/>
<rect x="160" y="524" width="1" height="1"/>
<rect x="158" y="526" width="1" height="1"/>
<rect x="143" y="528" width="1" height="1"/>
<rect x="194" y="520" width="1" height="1"/>
<rect x="192" y="528" width="1" height="1"/>
<rect x="105" y="534" width="1" height="1"/>
<rect x="114" y="537" width="1" height="1"/>
<rect x="114" y="540" width="1" height="1"/>
<rect x="127" y="534" width="1" height="1"/>
<rect x="137" y="537" width="1" height="1"/>
<rect x="92" y="538" width="1" height="1"/>
<rect x="84" y="539" width="1" height="1"/>
<rect x="60" y="540" width="1" height="1"/>
<rect x="74" y="544" width="1" height="1"/>
<rect x="86" y="544" width="1" height="1"/>
<rect x="124" y="544" width="1" height="1"/>
<rect x="112" y="549" width="1" height="1"/>
<rect x="117" y="549" width="1" height="1"/>
<rect x="64" y="550" width="1" height="1"/>
<rect x="93" y="560" width="1" height="1"/>
<rect x="65" y="562" width="1" height="1"/>
<rect x="81" y="572" width="1" height="1"/>
<rect x="75" y="576" width="1" height="1"/>
<rect x="64" y="577" width="1" height="1"/>
<rect x="67" y="586" width="1" height="1"/>
<rect x="67" y="593" width="1" height="1"/>
<rect x="59" y="645" width="1" height="1"/>
<rect x="64" y="644" width="1" height="1"/>
<rect x="68" y="644" width="1" height="1"/>
<rect x="89" y="644" width="1" height="1"/>
<rect x="92" y="645" width="1" height="1"/>
<rect x="103" y="646" width="1" height="1"/>
<rect x="108" y="646" width="1" height="1"/>
<rect x="110" y="646" width="1" height="1"/>
<rect x="112" y="646" width="1" height="1"/>
<rect x="119" y="645" width="1" height="1"/>
<rect x="121" y="645" width="1" height="1"/>
<rect x="131" y="639" width="1" height="1"/>
<rect x="143" y="644" width="1" height="1"/>
<rect x="151" y="645" width="1" height="1"/>
<rect x="157" y="645" width="1" height="1"/>
<rect x="165" y="644" width="1" height="1"/>
<rect x="174" y="643" width="1" height="1"/>
<rect x="183" y="645" width="1" height="1"/>
<rect x="188" y="645" width="1" height="1"/>
<rect x="193" y="645" width="1" height="1"/>
<rect x="196" y="645" width="1" height="1"/>
<rect x="205" y="642" width="1" height="1"/>
<rect x="211" y="645" width="1" height="1"/>
<rect x="225" y="643" width="1" height="1"/>
<rect x="238" y="645" width="1" height="1"/>
<rect x="240" y="645" width="1" height="1"/>
<rect x="242" y="640" width="1" height="1"/>
<rect x="255" y="645" width="1" height="1"/>
<rect x="266" y="644" width="1" height="1"/>
<rect x="270" y="645" width="1" height="1"/>
<rect x="297" y="644" width="1" height="1"/>
<rect x="306" y="645" width="1" height="1"/>
<rect x="317" y="645" width="1" height="1"/>
<rect x="319" y="644" width="1" height="1"/>
<rect x="321" y="645" width="1" height="1"/>
<rect x="332" y="645" width="1" height="1"/>
<rect x="334" y="646" width="1" height="1"/>
<rect x="336" y="644" width="1" height="1"/>
<rect x="342" y="645" width="1" height="1"/>
<rect x="351" y="640" width="1" height="1"/>
<rect x="362" y="643" width="1" height="1"/>
<rect x="382" y="643" width="1" height="1"/>
<rect x="426" y="449" width="1" height="1"/>
<rect x="663" y="447" width="1" height="1"/>
<rect x="606" y="457" width="1" height="1"/>
<rect x="407" y="466" width="1" height="1"/>
<rect x="477" y="466" width="1" height="1"/>
<rect x="534" y="461" width="1" height="1"/>
<rect x="576" y="468" width="1" height="1"/>
<rect x="652" y="462" width="1" height="1"/>
<rect x="719" y="464" width="1" height="1"/>
<rect x="542" y="480" width="1" height="1"/>
<rect x="551" y="482" width="1" height="1"/>
<rect x="666" y="482" width="1" height="1"/>
<rect x="486" y="492" width="1" height="1"/>
<rect x="606" y="496" width="1" height="1"/>
<rect x="515" y="516" width="1" height="1"/>
<rect x="436" y="525" width="1" height="1"/>
<rect x="523" y="527" width="1" height="1"/>
<rect x="580" y="527" width="1" height="1"/>
<rect x="514" y="538" width="1" height="1"/>
<rect x="690" y="538" width="1" height="1"/>
<rect x="416" y="558" width="1" height="1"/>
<rect x="429" y="576" width="1" height="1"/>
<rect x="391" y="645" width="1" height="1"/>
<rect x="402" y="645" width="1" height="1"/>
<rect x="408" y="644" width="1" height="1"/>
<rect x="412" y="645" width="1" height="1"/>
<rect x="421" y="645" width="1" height="1"/>
<rect x="436" y="645" width="1" height="1"/>
<rect x="448" y="645" width="1" height="1"/>
<rect x="459" y="644" width="1" height="1"/>
<rect x="461" y="644" width="1" height="1"/>
<rect x="465" y="644" width="1" height="1"/>
<rect x="480" y="640" width="1" height="1"/>
<rect x="528" y="645" width="1" height="1"/>
<rect x="536" y="644" width="1" height="1"/>
<rect x="556" y="645" width="1" height="1"/>
<rect x="558" y="645" width="1" height="1"/>
<rect x="568" y="640" width="1" height="1"/>
<rect x="613" y="645" width="1" height="1"/>
<rect x="652" y="644" width="1" height="1"/>
</g>
<polyline points="55.0,582.0 55.6,558.0 56.0,511.0 57.5,464.0 58.3,436.0 58.8,436.6 61.7,422.6 65.2,422.6 68.5,433.1 73.4,429.8 76.4,428.8 78.7,424.5 81.2,432.7 84.2,444.4 88.1,458.1 91.0,445.4 93.3,442.9 95.3,444.4 98.4,425.9 101.2,434.7 105.6,420.6 108.6,452.2 111.5,427.8 115.4,416.7 117.4,444.4 118.7,462.0 122.2,490.3 125.2,465.9 128.1,459.1 132.6,427.8 135.9,464.0 138.4,439.5 142.2,453.2 145.3,429.8 147.6,458.1 152.1,470.2 155.4,423.9 159.3,471.4 162.3,438.6 165.2,425.9 168.7,422.6 172.6,442.5 175.9,440.5 179.2,434.7 182.8,438.6 185.3,487.4 186.7,462.0 189.6,427.8 192.1,451.3 195.5,429.8 199.4,452.2 202.3,413.2 206.2,426.9 209.1,432.7 213.0,414.8 216.0,414.8 219.5,422.0 220.0,420.0 222.3,416.7 227.8,427.8 230.2,438.6 232.7,455.2 236.0,454.2 239.5,434.7 242.5,430.8 246.4,436.6 249.7,429.8 253.6,445.4 256.1,442.9 259.4,432.7 263.0,464.0 265.9,465.5 268.8,440.5 272.7,425.9 275.6,424.9 279.2,426.5 283.5,463.0 286.4,434.7 289.3,450.3 293.4,424.9 295.2,462.0 296.5,489.3 300.0,464.0 303.0,440.5 306.3,433.1 310.8,450.3 313.3,444.4 316.6,470.2 320.0,450.7 324.5,479.2 326.4,480.5 330.3,458.1 333.2,451.3 336.6,414.8 339.5,444.4 343.4,470.8 346.9,458.1 350.2,431.7 353.7,494.2 357.6,478.6 360.6,487.4 363.5,427.8 367.4,423.3 370.7,426.9 373.8,428.4 377.8,443.5 380.5,437.6 383.6,438.6 387.5,475.3 389.5,454.2 390.0,445.4 394.3,416.7 397.8,429.8 401.7,430.4 408.0,426.5 410.5,427.8 414.4,467.5 417.3,436.6 420.7,428.8 424.2,443.5 427.1,438.6 430.4,487.4 434.5,440.5 437.4,492.3 441.2,446.4 443.7,450.3 450.5,436.6 454.4,417.5 457.4,422.0 460.7,445.4 464.6,496.2 467.7,436.6 474.3,399.5 477.9,432.7 484.1,452.2 488.6,471.4 491.5,446.4 494.5,440.9 497.8,459.1 497.8,427.5 500.9,294.0 501.3,262.4 502.2,405.0 503.0,507.0 505.3,554.0 507.5,538.5 509.7,490.0 511.0,435.5 514.6,434.0 521.8,415.1 524.7,438.6 528.6,466.9 531.5,408.9 535.5,438.6 538.4,456.1 541.3,438.6 548.1,429.8 551.7,450.3 555.6,431.7 558.3,432.7 559.9,465.9 560.0,467.9 561.6,502.0 564.9,457.1 568.2,454.6 571.3,487.4 575.2,424.5 578.5,451.3 582.5,431.2 585.4,425.9 588.7,436.6 592.2,426.9 595.5,423.9 598.7,434.7 602.6,425.9 605.3,426.9 608.8,424.5 612.3,424.5 615.1,433.7 618.6,464.0 622.5,419.0 625.4,463.0 629.3,427.2 632.2,422.6 634.2,457.1 635.8,486.4 639.1,446.8 642.4,457.1 645.5,441.5 649.8,464.0 655.7,476.6 659.6,460.0 662.5,454.2 665.4,444.4 669.3,443.5 672.7,435.6 676.2,441.5 682.6,456.1 685.9,449.9 689.4,487.4 692.8,432.7 696.7,475.3 702.5,412.8 706.4,456.1 712.3,402.5 716.6,458.1 719.7,420.0 723.0,424.5" fill="none" stroke="#12b8f6" stroke-width="1" stroke-linejoin="bevel" shape-rendering="crispEdges"/>
</svg>
<div class="t" style="left:57.80px;top:201.00px;font-size:13.5px;color:#9c9c9c;letter-spacing:-0.275px;">trial version</div>
<div class="t" style="left:54.42px;top:185.00px;font-size:13.5px;color:#000;letter-spacing:0.124px;">MB/s</div>
<div class="t" style="left:704.82px;top:185.00px;font-size:13.5px;color:#000;letter-spacing:-0.073px;">ms</div>
<div class="t" style="left:35.89px;top:597.00px;font-size:13.5px;color:#000;letter-spacing:-1.200px;">10</div>
<div class="t" style="left:36.23px;top:539.00px;font-size:13.5px;color:#000;letter-spacing:-1.537px;">20</div>
<div class="t" style="left:36.36px;top:481.00px;font-size:13.5px;color:#000;letter-spacing:-1.672px;">30</div>
<div class="t" style="left:36.63px;top:423.00px;font-size:13.5px;color:#000;letter-spacing:-1.942px;">40</div>
<div class="t" style="left:36.36px;top:365.00px;font-size:13.5px;color:#000;letter-spacing:-1.672px;">50</div>
<div class="t" style="left:36.23px;top:307.00px;font-size:13.5px;color:#000;letter-spacing:-1.537px;">60</div>
<div class="t" style="left:36.23px;top:249.00px;font-size:13.5px;color:#000;letter-spacing:-1.537px;">70</div>
<div class="t" style="left:36.29px;top:192.00px;font-size:13.5px;color:#000;letter-spacing:-1.605px;">80</div>
<div class="t" style="left:728.06px;top:597.00px;font-size:13.5px;color:#000;letter-spacing:0.000px;">5</div>
<div class="t" style="left:727.19px;top:539.00px;font-size:13.5px;color:#000;letter-spacing:-0.200px;">10</div>
<div class="t" style="left:727.19px;top:481.00px;font-size:13.5px;color:#000;letter-spacing:-0.133px;">15</div>
<div class="t" style="left:727.53px;top:423.00px;font-size:13.5px;color:#000;letter-spacing:-0.538px;">20</div>
<div class="t" style="left:727.53px;top:365.00px;font-size:13.5px;color:#000;letter-spacing:-0.470px;">25</div>
<div class="t" style="left:727.66px;top:307.00px;font-size:13.5px;color:#000;letter-spacing:-0.673px;">30</div>
<div class="t" style="left:727.66px;top:249.00px;font-size:13.5px;color:#000;letter-spacing:-0.605px;">35</div>
<div class="t" style="left:727.93px;top:192.00px;font-size:13.5px;color:#000;letter-spacing:-0.943px;">40</div>
<div class="t" style="left:51.56px;top:668.00px;font-size:13.5px;color:#000;letter-spacing:0.000px;">0</div>
<div class="t" style="left:110.39px;top:668.00px;font-size:13.5px;color:#000;letter-spacing:-0.896px;">100</div>
<div class="t" style="left:177.72px;top:668.00px;font-size:13.5px;color:#000;letter-spacing:-1.065px;">200</div>
<div class="t" style="left:244.86px;top:668.00px;font-size:13.5px;color:#000;letter-spacing:-1.132px;">300</div>
<div class="t" style="left:312.13px;top:668.00px;font-size:13.5px;color:#000;letter-spacing:-1.267px;">400</div>
<div class="t" style="left:378.86px;top:668.00px;font-size:13.5px;color:#000;letter-spacing:-1.132px;">500</div>
<div class="t" style="left:444.72px;top:668.00px;font-size:13.5px;color:#000;letter-spacing:-1.065px;">600</div>
<div class="t" style="left:511.72px;top:668.00px;font-size:13.5px;color:#000;letter-spacing:-1.065px;">700</div>
<div class="t" style="left:578.79px;top:668.00px;font-size:13.5px;color:#000;letter-spacing:-1.099px;">800</div>
<div class="t" style="left:645.79px;top:668.00px;font-size:13.5px;color:#000;letter-spacing:-1.099px;">900</div>
<div class="t" style="left:701.59px;top:668.00px;font-size:13.5px;color:#000;letter-spacing:-0.584px;">1000gB</div>
<div class="btn" style="left:768px;top:176px;width:98px;height:26px;"></div>
<div class="t" style="left:802.69px;top:183.00px;font-size:13.5px;color:#000;letter-spacing:-0.127px;">Start</div>
<div class="sep" style="top:215px"></div>
<div class="sep" style="top:263px"></div>
<div class="sep" style="top:351px"></div>
<div class="sep" style="top:479px"></div>
<svg width="17" height="17" style="left:763px;top:223px"><circle cx="8" cy="8" r="7.4" fill="#fff" stroke="#333" stroke-width="1"/><circle cx="8" cy="8" r="4.7" fill="#333"/></svg>
<svg width="17" height="17" style="left:763px;top:243px"><circle cx="8" cy="8" r="7.4" fill="#fff" stroke="#333" stroke-width="1"/></svg>
<div class="t" style="left:781.42px;top:225.00px;font-size:13.5px;color:#000;letter-spacing:0.931px;">Read</div>
<div class="t" style="left:782.13px;top:245.00px;font-size:13.5px;color:#000;letter-spacing:-0.094px;">Write</div>
<div class="cb" style="top:273px"></div>
<div class="t" style="left:781.89px;top:275.00px;font-size:13.5px;color:#000;letter-spacing:-0.159px;">Short stroke</div>
<div class="r" style="left:763px;top:297px;width:82px;height:24px;background:#fff;border:1px solid #c8c8c8;"></div>
<div class="r" style="left:824px;top:298px;width:20px;height:22px;background:#f0f0f0;border-left:1px solid #dadada;"></div>
<div class="r" style="left:825px;top:299px;width:18px;height:10px;background:#ededed;border:1px solid #dcdcdc;"></div>
<div class="r" style="left:825px;top:309px;width:18px;height:10px;background:#ededed;border:1px solid #dcdcdc;"></div>
<svg width="10" height="6" style="left:829px;top:301.5px"><polygon points="1,5 5,1 9,5" fill="#6a6a6a"/></svg>
<svg width="10" height="6" style="left:829px;top:311.5px"><polygon points="1,0.5 5,4.5 9,0.5" fill="#6a6a6a"/></svg>
<div class="t" style="left:766.03px;top:302.00px;font-size:13.5px;color:#8a8a8a;letter-spacing:-1.142px;">40</div>
<div class="t" style="left:861.16px;top:303.00px;font-size:13.5px;color:#000;letter-spacing:0.345px;">gB</div>
<div class="cb" style="top:333px"><svg width="14" height="14" style="left:0;top:0"><polyline points="1.4,7.2 5.3,11 12.4,3.8" fill="none" stroke="#333" stroke-width="1.2"/></svg></div>
<div class="t" style="left:782.93px;top:335.00px;font-size:13.5px;color:#000;letter-spacing:-0.148px;">Transfer rate</div>
<div class="t" style="left:762.52px;top:357.00px;font-size:13.5px;color:#000;letter-spacing:-0.125px;">Minimum</div>
<div class="blk" style="top:374px"></div>
<div class="t" style="left:762.52px;top:397.00px;font-size:13.5px;color:#000;letter-spacing:-0.128px;">Maximum</div>
<div class="blk" style="top:414px"></div>
<div class="t" style="left:763.20px;top:435.00px;font-size:13.5px;color:#000;letter-spacing:0.298px;">Average</div>
<div class="blk" style="top:452px"></div>
<div class="cb" style="top:487px"><svg width="14" height="14" style="left:0;top:0"><polyline points="1.4,7.2 5.3,11 12.4,3.8" fill="none" stroke="#333" stroke-width="1.2"/></svg></div>
<div class="t" style="left:782.50px;top:489.00px;font-size:13.5px;color:#000;letter-spacing:-0.036px;">Access time</div>
<div class="blk" style="top:506px"></div>
<div class="cb" style="top:529px"><svg width="14" height="14" style="left:0;top:0"><polyline points="1.4,7.2 5.3,11 12.4,3.8" fill="none" stroke="#333" stroke-width="1.2"/></svg></div>
<div class="t" style="left:781.42px;top:531.00px;font-size:13.5px;color:#000;letter-spacing:-0.215px;">Burst rate</div>
<div class="blk" style="top:548px"></div>
<div class="t" style="left:763.12px;top:571.00px;font-size:13.5px;color:#000;letter-spacing:0.004px;">CPU usage</div>
<div class="blk" style="top:588px"></div>
<div class="t" style="left:791.86px;top:375.00px;font-size:14px;color:#08b6ff;letter-spacing:0.232px;font-weight:bold;">14.0 MB/s</div>
<div class="t" style="left:790.71px;top:415.00px;font-size:14px;color:#08b6ff;letter-spacing:0.376px;font-weight:bold;">69.1 MB/s</div>
<div class="t" style="left:790.85px;top:453.00px;font-size:14px;color:#08b6ff;letter-spacing:0.359px;font-weight:bold;">37.7 MB/s</div>
<div class="t" style="left:798.91px;top:507.00px;font-size:14px;color:#ffff00;letter-spacing:0.228px;font-weight:bold;">22.0 ms</div>
<div class="t" style="left:790.99px;top:549.00px;font-size:14px;color:#fff;letter-spacing:0.341px;font-weight:bold;">40.9 MB/s</div>
<div class="t" style="left:807.71px;top:589.00px;font-size:14px;color:#fff;letter-spacing:0.607px;font-weight:bold;">6.5%</div>
<div class="t" style="left:762.62px;top:625.00px;font-size:13.5px;color:#000;letter-spacing:0.040px;">Number of passes</div>
<div class="r" style="left:763px;top:641px;width:104px;height:24px;background:#fff;border:1px solid #7a7a7a;"></div>
<div class="r" style="left:845px;top:641px;width:22px;height:24px;background:#f0f0f0;border:1px solid #c4c4c4;border-left:none;"></div>
<div class="r" style="left:847px;top:643px;width:18px;height:10px;background:#e5e5e5;border:1px solid #adadad;"></div>
<div class="r" style="left:847px;top:654px;width:18px;height:10px;background:#e5e5e5;border:1px solid #adadad;"></div>
<svg width="10" height="6" style="left:851px;top:645px"><polygon points="0.5,5.5 5,1 9.5,5.5" fill="#222"/></svg>
<svg width="10" height="6" style="left:851px;top:656px"><polygon points="0.5,0.5 5,5 9.5,0.5" fill="#222"/></svg>
<div class="t " style="left:767.00px;top:646.00px;font-size:13px;color:#000;">1</div>
<div class="r" style="left:763px;top:675px;width:72px;height:16px;background:#06b025;border:1px solid #bcbcbc;"></div>
<div class="t" style="left:841.59px;top:677.00px;font-size:13.5px;color:#000;letter-spacing:-0.723px;">1/1</div>
<div class="r" style="left:23px;top:711px;width:871px;height:1px;background:#f8f8f8;"></div>
<div class="r" style="left:23px;top:712px;width:871px;height:1px;background:#fff;"></div>
<div class="r" style="left:23px;top:713px;width:871px;height:1px;background:#d6d6d6;"></div>
<div class="r" style="left:23px;top:717px;width:871px;height:1px;background:#d6d6d6;"></div>
<div class="r" style="left:909px;top:711px;width:13px;height:1px;background:#fff;"></div>
<div class="r" style="left:910px;top:712px;width:12px;height:9px;background:#000;"></div>
</body></html>
